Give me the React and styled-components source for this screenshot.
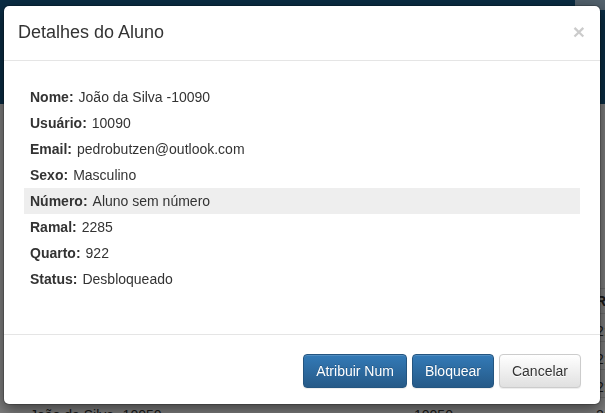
import React from "react";
import styled, { createGlobalStyle } from "styled-components";

const details = [
  { label: "Nome", value: "João da Silva -10090" },
  { label: "Usuário", value: "10090" },
  { label: "Email", value: "pedrobutzen@outlook.com" },
  { label: "Sexo", value: "Masculino" },
  { label: "Número", value: "Aluno sem número", active: true },
  { label: "Ramal", value: "2285" },
  { label: "Quarto", value: "922" },
  { label: "Status", value: "Desbloqueado" },
];

const tableRows = [
  ["Nome", "Usuário", "Ramal"],
  ["João da Silva -10020", "10020", "2:"],
  ["João da Silva -10030", "10030", "2:"],
  ["João da Silva -10040", "10040", "2:"],
  ["João da Silva -10050", "10050", "2:"],
];

const App = () => {
  return (
    <>
      <GlobalStyle />
      <Page>
        <Navbar>
          <NavItem />
        </Navbar>
        <Content>
          <Table>
            {tableRows.map((row, i) => (
              <TableRow key={i} $head={i === 0}>
                <Cell>{row[0]}</Cell>
                <Cell>{row[1]}</Cell>
                <Cell $last>{row[2]}</Cell>
              </TableRow>
            ))}
          </Table>
        </Content>
      </Page>
      <Backdrop />
      <Modal>
        <Header>
          <Title>Detalhes do Aluno</Title>
          <Close type="button">×</Close>
        </Header>
        <Body>
          {details.map((d) => (
            <Row key={d.label} $active={d.active}>
              <Label>{d.label}:</Label>
              {d.value}
            </Row>
          ))}
        </Body>
        <Footer>
          <Button $primary>Atribuir Num</Button>
          <Button $primary>Bloquear</Button>
          <Button>Cancelar</Button>
        </Footer>
      </Modal>
    </>
  );
};

export default App;

const GlobalStyle = createGlobalStyle`
    html, body {
        margin: 0;
        padding: 0;
        height: 100%;
        overflow: hidden;
        background: #fff;
    }
    body {
        font-family: "Liberation Sans", Arial, Helvetica, sans-serif;
        font-size: 14px;
        line-height: 20px;
        color: #333;
    }
`;

const Page = styled.div`
    display: flex;
    flex-direction: column;
    height: 413px;
    overflow: hidden;
`;

const Navbar = styled.div`
    flex: none;
    height: 104px;
    background: #145a88;
    display: flex;
    justify-content: flex-end;
    align-items: flex-start;
`;

const NavItem = styled.div`
    width: 30px;
    height: 10px;
    background: #a6c4da;
`;

const Content = styled.div`
    padding: 184px 0 0 22px;
`;

const Table = styled.div`
    display: flex;
    flex-direction: column;
`;

const TableRow = styled.div`
    display: grid;
    grid-template-columns: 384px 190px 1fr;
    height: ${(p) => (p.$head ? "24px" : "27px")};
    align-items: ${(p) => (p.$head ? "center" : "end")};
    border-top: 1px solid #ddd;
    font-weight: ${(p) => (p.$head ? "bold" : "normal")};
    color: #333;
`;

const Cell = styled.div`
    padding-left: ${(p) => (p.$last ? "0" : "8px")};
    white-space: nowrap;
    overflow: hidden;
`;

const Backdrop = styled.div`
    position: fixed;
    inset: 0;
    background: rgba(0, 0, 0, 0.5);
`;

const Modal = styled.div`
    position: fixed;
    top: 5px;
    left: 3px;
    width: 598px;
    box-sizing: border-box;
    background: #fff;
    border: 1px solid rgba(0, 0, 0, 0.2);
    border-radius: 6px;
    box-shadow: 0 5px 15px rgba(0, 0, 0, 0.5);
    background-clip: padding-box;
`;

const Header = styled.div`
    display: flex;
    justify-content: space-between;
    align-items: flex-start;
    padding: 14px 15px 15px 14px;
    border-bottom: 1px solid #e5e5e5;
`;

const Title = styled.h4`
    margin: 0;
    font-size: 18px;
    font-weight: normal;
    line-height: 25px;
    color: #333;
`;

const Close = styled.button`
    margin-top: 1px;
    padding: 0;
    border: 0;
    background: transparent;
    font-family: "Liberation Sans", Arial, sans-serif;
    font-size: 21px;
    font-weight: bold;
    line-height: 1;
    color: #000;
    opacity: 0.2;
    text-shadow: 0 1px 0 #fff;
    cursor: pointer;
`;

const Body = styled.div`
    display: flex;
    flex-direction: column;
    padding: 23px 20px 27px;
`;

const Row = styled.div`
    display: flex;
    gap: 5px;
    height: 26px;
    line-height: 26px;
    padding: 0 6px;
    background: ${(p) => (p.$active ? "#eee" : "transparent")};
    white-space: nowrap;
`;

const Label = styled.b`
    font-weight: bold;
`;

const Footer = styled.div`
    display: flex;
    justify-content: flex-end;
    gap: 5px;
    margin-top: 15px;
    padding: 19px 19px 16px;
    border-top: 1px solid #e5e5e5;
`;

const Button = styled.button`
    font-family: "Liberation Sans", Arial, sans-serif;
    font-size: 14px;
    line-height: 20px;
    padding: 6px 12px;
    border-radius: 4px;
    border: 1px solid ${(p) => (p.$primary ? "#245580" : "#ccc")};
    color: ${(p) => (p.$primary ? "#fff" : "#333")};
    background-image: ${(p) =>
      p.$primary
        ? "linear-gradient(to bottom, #337ab7 0, #265a88 100%)"
        : "linear-gradient(to bottom, #fff 0, #e0e0e0 100%)"};
    text-shadow: ${(p) =>
      p.$primary ? "0 -1px 0 rgba(0, 0, 0, 0.2)" : "0 1px 0 #fff"};
    box-shadow: inset 0 1px 0 rgba(255, 255, 255, 0.15), 0 1px 1px rgba(0, 0, 0, 0.075);
    cursor: pointer;
`;
